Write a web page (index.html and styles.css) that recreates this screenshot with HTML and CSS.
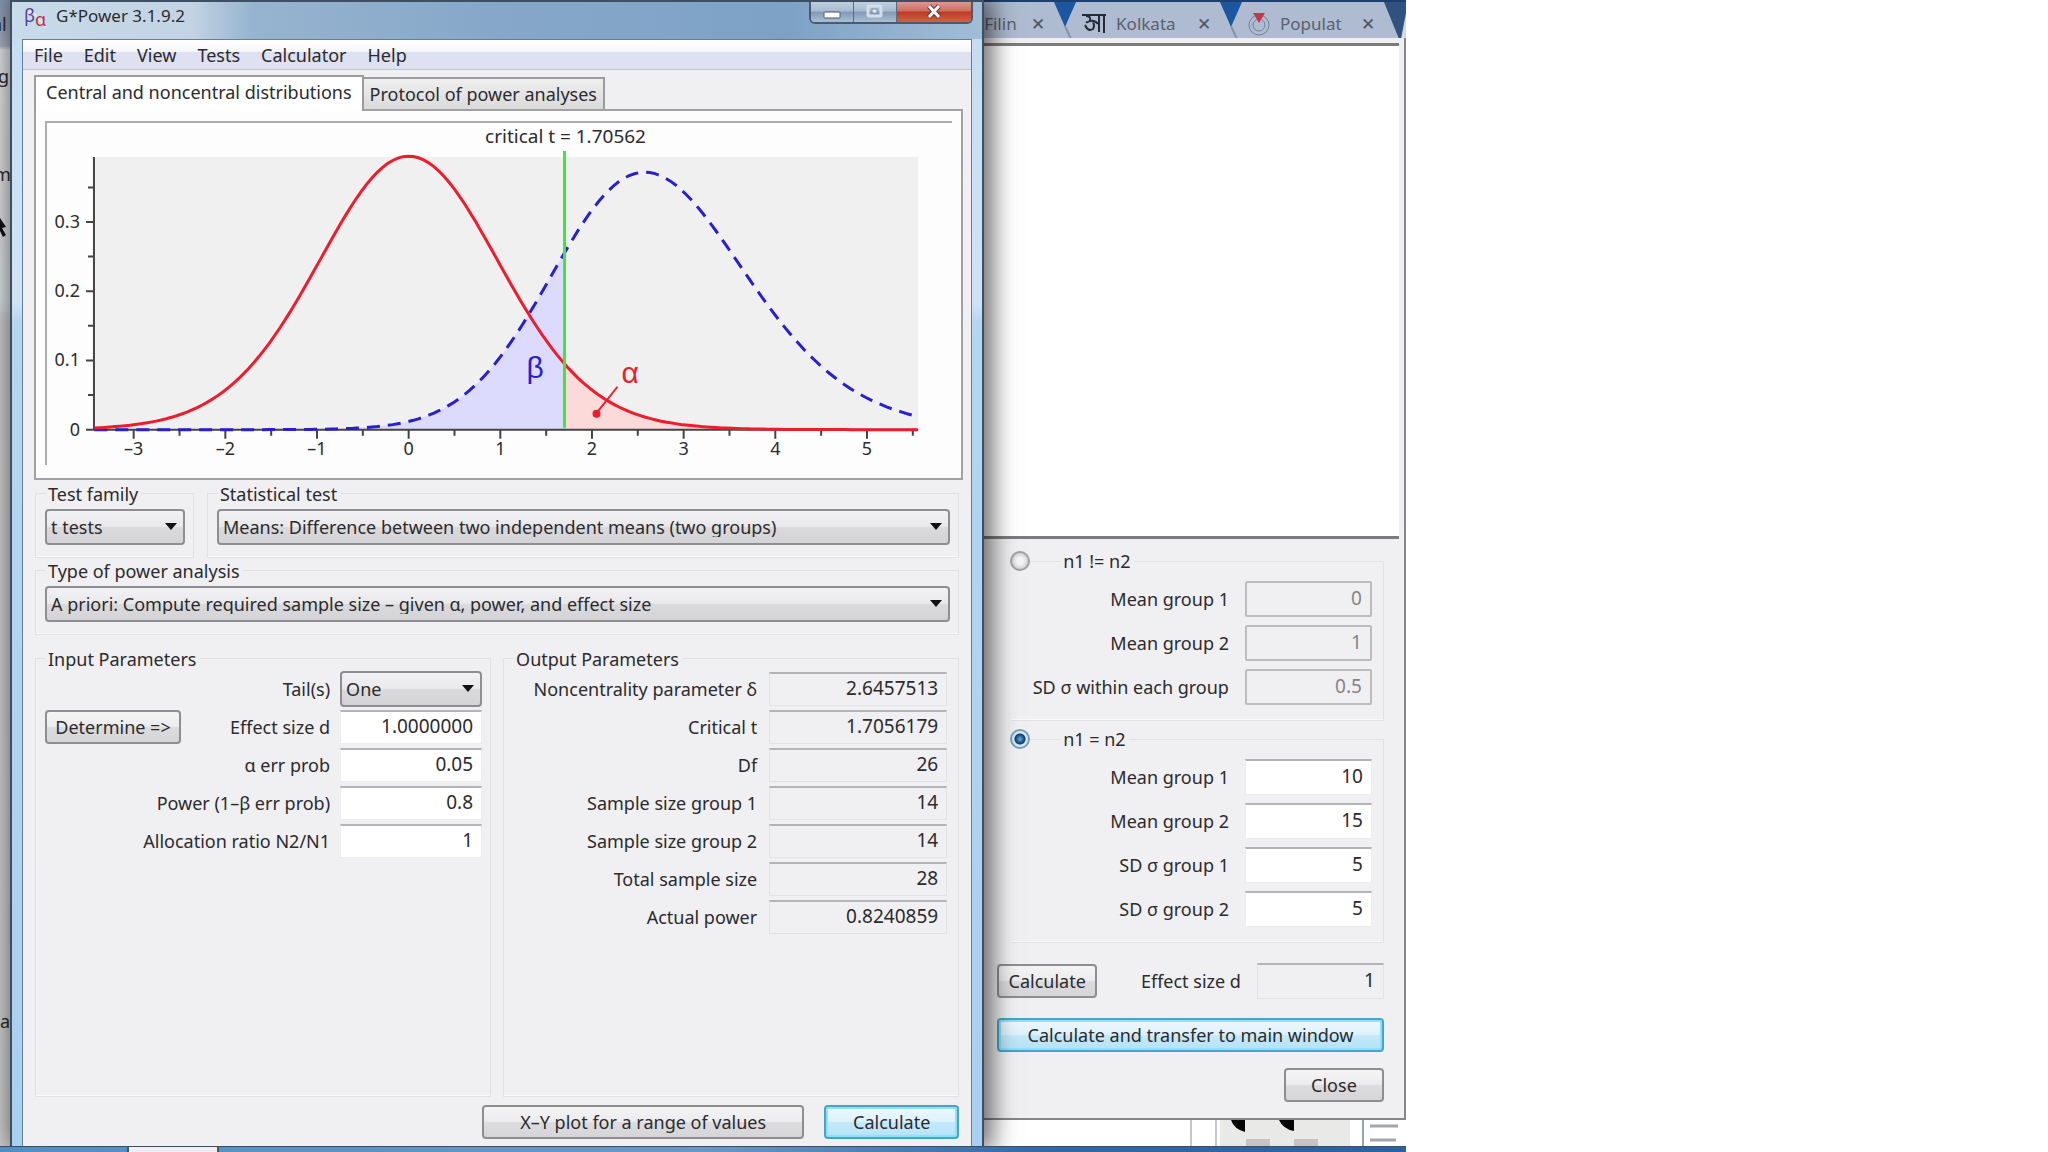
FILE: index.html
```
<!DOCTYPE html>
<html lang="en">
<head>
    <meta charset="UTF-8">
    <meta name="viewport" content="width=device-width, initial-scale=1.0">
    <title>G*Power 3.1.9.2</title>
    <link rel="stylesheet" href="styles.css">
</head>
<body>
<div class="desktop">

    <!-- page behind the windows -->
    <div class="behind-left">
        <span class="bit-al">al</span>
        <span class="bit-g">g</span>
        <span class="bit-m">m</span>
        <svg class="bit-cursor" width="8" height="20" viewBox="0 0 8 20"><path d="M0 0L6 9L2 10L6 17L3 19L0 13Z" fill="#111"/></svg>
        <span class="bit-a">a</span>
    </div>
    <div class="behind-bottom">
        <svg width="216" height="27" viewBox="0 0 216 27">
            <path d="M1 0V27M26 0V27" stroke="#c4c8cc" stroke-width="2"/>
            <rect x="30" y="0" width="130" height="27" fill="#e9eae8"/>
            <path d="M41 0H55V12Q44 9 41 0ZM89 0H104V11Q93 9 89 0Z" fill="#050505"/>
            <rect x="56" y="19" width="24" height="8" fill="#cbc3c3"/>
            <rect x="104" y="19" width="24" height="8" fill="#cbc3c3"/>
            <path d="M173 0V27" stroke="#8aa9bd" stroke-width="2"/>
            <path d="M180 6H208M180 20H206" stroke="#a4a6aa" stroke-width="3"/>
        </svg>
    </div>

    <!-- effect size drawer -->
    <section class="drawer">
        <div class="browser-tabs">
            <span class="tab-name first">Filin</span>
            <span class="tab-x">✕</span>
            <svg class="wedge" width="22" height="37" viewBox="0 0 22 37"><path d="M0 0H22L11 25Z" fill="#1c55a0"/><path d="M11 24L17 37" stroke="#8592a8" stroke-width="2"/></svg>
            <svg class="site" width="26" height="22" viewBox="0 0 26 22" fill="none" stroke="#222b38" stroke-width="2"><path d="M1 2H25M18 2V19M23 2V20M5 3Q10 3 9 7Q8 10 5 9M9 8Q14 7 17 11M4 12Q7 19 12 16Q14 13 12 9"/></svg>
            <span class="tab-name">Kolkata</span>
            <span class="tab-x">✕</span>
            <svg class="wedge" width="22" height="37" viewBox="0 0 22 37"><path d="M0 0H22L11 25Z" fill="#1c55a0"/><path d="M11 24L17 37" stroke="#8592a8" stroke-width="2"/></svg>
            <svg class="site" width="24" height="24" viewBox="0 0 24 24"><g fill="none" stroke="#75809a"><circle cx="12" cy="13" r="10"/><circle cx="12" cy="13" r="6"/></g><path d="M6 1H18L12 11Z" fill="#c93548"/></svg>
            <span class="tab-name">Populat</span>
            <span class="tab-x">✕</span>
            <svg class="wedge last" width="22" height="37" viewBox="0 0 22 37"><path d="M0 0H22V37H15Z" fill="#31527e"/><path d="M22 11L17 37H22Z" fill="#d5dae2"/></svg>
        </div>
        <div class="drawer-blank"></div>
        <form class="drawer-form">
            <div class="choice">
                <input type="radio" name="mode" id="unequal">
                <fieldset class="etched">
                    <legend><label for="unequal">n1 != n2</label></legend>
                    <div class="field"><label for="m1">Mean group 1</label><input type="text" id="m1" value="0" disabled></div>
                    <div class="field"><label for="m2">Mean group 2</label><input type="text" id="m2" value="1" disabled></div>
                    <div class="field"><label for="sd">SD σ within each group</label><input type="text" id="sd" value="0.5" disabled></div>
                </fieldset>
            </div>
            <div class="choice">
                <input type="radio" name="mode" id="equal" checked>
                <fieldset class="etched">
                    <legend><label for="equal">n1 = n2</label></legend>
                    <div class="field"><label for="mg1">Mean group 1</label><input type="text" id="mg1" value="10"></div>
                    <div class="field"><label for="mg2">Mean group 2</label><input type="text" id="mg2" value="15"></div>
                    <div class="field"><label for="sd1">SD σ group 1</label><input type="text" id="sd1" value="5"></div>
                    <div class="field"><label for="sd2">SD σ group 2</label><input type="text" id="sd2" value="5"></div>
                </fieldset>
            </div>
            <div class="drawer-result">
                <button type="button" class="btn">Calculate</button>
                <label for="dres">Effect size d</label>
                <input type="text" id="dres" value="1" readonly>
            </div>
            <button type="button" class="btn primary">Calculate and transfer to main window</button>
            <button type="button" class="btn close-drawer">Close</button>
        </form>
    </section>

    <!-- main window -->
    <main class="window">
        <header class="titlebar">
            <svg class="app-icon" width="24" height="24" viewBox="0 0 24 24">
                <path d="M1 20Q5 1 9 6T22 21" fill="none" stroke="#e9e4f2" stroke-width="2"/>
                <text x="0" y="16" class="icon-b">β</text>
                <text x="11" y="20" class="icon-a">α</text>
            </svg>
            <h1>G*Power 3.1.9.2</h1>
            <div class="win-buttons">
                <button type="button" class="win-min" aria-label="Minimize"><svg width="20" height="16" viewBox="0 0 20 16"><rect x="2" y="8" width="16" height="6" rx="1" fill="#fff" stroke="#515a68"/></svg></button>
                <button type="button" class="win-max" aria-label="Maximize"><svg width="20" height="16" viewBox="0 0 20 16"><rect x="3" y="2" width="13" height="10" rx="1" fill="none" stroke="#d5dde9" stroke-width="3"/><rect x="7" y="5" width="5" height="4" fill="#e3e8f0" stroke="#8190a6"/></svg></button>
                <button type="button" class="win-close" aria-label="Close window"><svg width="20" height="16" viewBox="0 0 20 16"><path d="M5 2L15 13M15 2L5 13" stroke="#6a3430" stroke-width="5"/><path d="M5 2L15 13M15 2L5 13" stroke="#fff" stroke-width="3"/></svg></button>
            </div>
        </header>

        <div class="client">
            <nav class="menubar">
                <button type="button">File</button>
                <button type="button">Edit</button>
                <button type="button">View</button>
                <button type="button">Tests</button>
                <button type="button">Calculator</button>
                <button type="button">Help</button>
            </nav>

            <section class="tabs">
                <div class="tab-row" role="tablist">
                    <button type="button" role="tab" class="tab active" aria-selected="true">Central and noncentral distributions</button>
                    <button type="button" role="tab" class="tab" aria-selected="false">Protocol of power analyses</button>
                </div>
                <div class="tab-panel" role="tabpanel">
                    <div class="plot">
                        <svg id="chart" viewBox="0 0 906 342">
                            <rect x="47" y="34" width="825" height="273" fill="#f0f0f0"/>
                            <path id="beta-area" fill="#dcdafd"/>
                            <path id="alpha-area" fill="#fddada"/>
                            <g id="axes" stroke="#444" stroke-width="2"></g>
                            <path id="h1" fill="none" stroke="#2a1fd0" stroke-width="3" stroke-dasharray="13 8"/>
                            <path id="h0" fill="none" stroke="#ee1c2c" stroke-width="3"/>
                            <path d="M518 28V305" stroke="#3ee63e" stroke-width="3"/>
                            <path d="M571 264L552 288" stroke="#ee1c2c" stroke-width="2"/>
                            <circle cx="550" cy="291" r="4" fill="#ee1c2c"/>
                            <text x="519" y="20" class="middle caption">critical t = 1.70562</text>
                            <text x="480" y="255" class="greek blue">β</text>
                            <text x="575" y="260" class="greek red">α</text>
                        </svg>
                    </div>
                </div>
            </section>

            <form class="settings">
                <div class="test-row">
                    <fieldset class="etched family">
                        <legend><label for="family">Test family</label></legend>
                        <select id="family"><option>t tests</option></select>
                    </fieldset>
                    <fieldset class="etched stat">
                        <legend><label for="stat">Statistical test</label></legend>
                        <select id="stat"><option>Means: Difference between two independent means (two groups)</option></select>
                    </fieldset>
                </div>
                <fieldset class="etched type">
                    <legend><label for="type">Type of power analysis</label></legend>
                    <select id="type"><option>A priori: Compute required sample size – given α, power, and effect size</option></select>
                </fieldset>
                <div class="params">
                    <fieldset class="etched inputs">
                        <legend>Input Parameters</legend>
                        <div class="row"><label for="tails">Tail(s)</label><select id="tails"><option>One</option></select></div>
                        <div class="row"><button type="button" class="btn determine">Determine =&gt;</button><label for="effect">Effect size d</label><input type="text" id="effect" value="1.0000000"></div>
                        <div class="row"><label for="alpha">α err prob</label><input type="text" id="alpha" value="0.05"></div>
                        <div class="row"><label for="power">Power (1–β err prob)</label><input type="text" id="power" value="0.8"></div>
                        <div class="row"><label for="ratio">Allocation ratio N2/N1</label><input type="text" id="ratio" value="1"></div>
                    </fieldset>
                    <fieldset class="etched outputs">
                        <legend>Output Parameters</legend>
                        <div class="row"><label for="ncp">Noncentrality parameter δ</label><input type="text" id="ncp" value="2.6457513" readonly></div>
                        <div class="row"><label for="crit">Critical t</label><input type="text" id="crit" value="1.7056179" readonly></div>
                        <div class="row"><label for="df">Df</label><input type="text" id="df" value="26" readonly></div>
                        <div class="row"><label for="s1">Sample size group 1</label><input type="text" id="s1" value="14" readonly></div>
                        <div class="row"><label for="s2">Sample size group 2</label><input type="text" id="s2" value="14" readonly></div>
                        <div class="row"><label for="total">Total sample size</label><input type="text" id="total" value="28" readonly></div>
                        <div class="row"><label for="actual">Actual power</label><input type="text" id="actual" value="0.8240859" readonly></div>
                    </fieldset>
                </div>
                <div class="actions">
                    <button type="button" class="btn xy">X–Y plot for a range of values</button>
                    <button type="button" class="btn primary calc">Calculate</button>
                </div>
            </form>
        </div>
    </main>

    <footer class="taskbar"><span class="task-item"></span></footer>
</div>
<script src="chart.js"></script>
</body>
</html>
```
FILE: styles.css
```
* {
    box-sizing: border-box;
}

body {
    margin: 0;
    background: #fff;
    color: #2b2b2e;
    font: 18px/20px "Noto Sans", "Open Sans", sans-serif;
}

button, input, select {
    font: inherit;
    color: inherit;
}

h1 {
    margin: 0;
    font-size: 17px;
    font-weight: normal;
}

.desktop {
    position: relative;
    width: 68.65%;
    height: 100vh;
    min-height: 1152px;
    overflow: hidden;
    background: #fff;
}

/* page behind the windows */
.behind-left {
    position: absolute;
    left: 0;
    top: 0;
    bottom: 0;
    width: 12px;
    overflow: hidden;
    background: linear-gradient(#8798b3 0, #a9b4c6 46px, #e4e5e6 50px, #dedede 240px, #d8e4e4 300px, #cfcfcf 320px, #d2d2d2 100%);
}

.behind-left span,
.behind-left svg {
    position: absolute;
    left: 0;
}

.behind-left .bit-al { top: 14px; left: -8px; }
.behind-left .bit-g { top: 66px; left: -2px; }
.behind-left .bit-m { top: 164px; left: -6px; }
.behind-left .bit-cursor { top: 218px; }
.behind-left .bit-a { top: 1011px; }

.behind-bottom {
    position: absolute;
    left: 70%;
    right: 0;
    bottom: 5px;
    display: flex;
    justify-content: flex-end;
    height: 27px;
    background: #fff;
}

.taskbar {
    position: absolute;
    left: 0;
    right: 0;
    bottom: 0;
    z-index: 3;
    height: 6px;
    padding-left: 127px;
    border-top: 1px solid #3c4d60;
    background: linear-gradient(90deg, #4f8fc4, #6a97c4 50%, #2f67a8 75%, #2b62a3);
}

.task-item {
    display: block;
    width: 92px;
    height: 5px;
    border: 1px solid #49545f;
    border-width: 0 2px;
    background: #eeeff5;
}

/* shared controls */
.btn {
    height: 34px;
    padding: 0;
    border: 2px solid #8e8e90;
    border-radius: 4px;
    background: linear-gradient(#f4f4f5 0, #ececee 48%, #dcdcde 52%, #d6d6d8 100%);
}

.btn.primary {
    border-color: #45a5c8;
    background: linear-gradient(#eef8fd 0, #ddf2fc 48%, #c4e9fa 52%, #b5e2f7 100%);
    box-shadow: inset 0 0 0 2px #8fe0f8;
}

select {
    width: 100%;
    height: 36px;
    padding: 0 4px;
    border: 2px solid #8e8e90;
    border-radius: 4px;
    appearance: none;
    background: url("data:image/svg+xml,%3Csvg xmlns='http://www.w3.org/2000/svg' width='12' height='7'%3E%3Cpath d='M0 0H12L6 7Z' fill='%23111'/%3E%3C/svg%3E") no-repeat right 6px center, linear-gradient(#f2f1f3 0, #e9e8ea 48%, #dad9db 52%, #d4d3d6 100%);
}

input[type="text"] {
    height: 34px;
    padding: 0 8px 3px;
    border: 1px solid #ececee;
    border-top: 2px solid #b4b4b6;
    background: #fff;
    font-size: 19px;
    text-align: right;
}

input[type="text"]:read-only {
    border-color: #e3e3e6;
    border-top-color: #b4b4b6;
    background: #f0eff2;
}

input[type="text"]:disabled {
    border: 2px solid #bcbcbf;
    border-radius: 2px;
    color: #858588;
}

.etched {
    min-width: 0;
    margin: 0;
    padding: 5px 8px 12px 9px;
    border: 1px solid #e2e2e5;
    box-shadow: inset 0 -1px 0 #f9f9fa;
}

.etched legend {
    margin-left: 1px;
    padding: 0 3px 0 2px;
    line-height: 20px;
}

/* main window */
.window {
    position: absolute;
    left: 10px;
    right: 30%;
    top: 0;
    bottom: 5px;
    z-index: 2;
    display: flex;
    flex-direction: column;
    border: solid #3e4f63;
    border-width: 2px 2px 0;
    background: linear-gradient(#c5dcf1 0, #cfe3f5 300px, #b5d6f0 320px, #a9cff0 100%);
    box-shadow: 4px 0 24px 4px rgba(0, 0, 0, 0.6);
}

.titlebar {
    display: flex;
    align-items: flex-start;
    height: 37px;
    padding: 0 9px 0 12px;
    background: linear-gradient(90deg, #c7dbe8 0, #c3d3e4 180px, #96b4cf 240px, #86a7c9 50%, #7da2c6 80%, #a2bdd6 100%);
}

.titlebar h1 {
    margin: 4px auto 0 8px;
}

.app-icon {
    margin-top: 4px;
}

.icon-b {
    font-size: 18px;
    fill: #53439c;
}

.icon-a {
    font-size: 18px;
    fill: #b03a46;
}

.win-buttons {
    display: flex;
    border: 2px solid #4d5a6c;
    border-top: 0;
    border-radius: 0 0 6px 6px;
    overflow: hidden;
}

.win-buttons button {
    display: grid;
    place-items: center;
    width: 43px;
    height: 20px;
    padding: 0;
    border: 0;
    border-right: 1px solid #596b82;
    background: linear-gradient(#c0cfdf 0, #a8bbd1 45%, #8199b5 50%, #a9bfd6 100%);
}

.win-buttons .win-close {
    width: 74px;
    border-right: 0;
    background: linear-gradient(#dc9a8e 0, #cc6e5e 45%, #bd3a24 50%, #d2604a 100%);
}

.client {
    display: flex;
    flex: 1;
    flex-direction: column;
    margin: 0 10px;
    border: 1px solid #657e99;
    border-width: 1px 1px 0;
    background: #f0eff1;
}

.menubar {
    display: flex;
    gap: 21px;
    height: 30px;
    padding: 0 11px;
    border-bottom: 1px solid #c2c5cf;
    background: linear-gradient(#fff 0, #f5f6fb 40%, #dde0f0 42%, #dfe2f1 100%);
}

.menubar button {
    padding: 0;
    border: 0;
    background: none;
}

.tabs {
    margin: 5px 8px 0 11px;
}

.tab-row {
    display: flex;
    align-items: flex-end;
}

.tab {
    height: 32px;
    padding: 0 6px;
    border: 2px solid #9c9c9e;
    border-left-width: 0;
    border-bottom: 0;
    background: linear-gradient(#efeff0, #dadadb);
}

.tab.active {
    position: relative;
    z-index: 1;
    height: 36px;
    margin-bottom: -2px;
    padding: 0 10px 4px;
    border-left-width: 2px;
    background: #fff;
}

.tab-panel {
    padding: 10px 9px 13px;
    border: 2px solid #a2a2a4;
    background: #fdfdfd;
}

.plot {
    border: solid #acacae;
    border-width: 2px 0 0 2px;
}

.plot svg {
    display: block;
    width: 100%;
    height: auto;
}

#chart text {
    fill: #2b2b2e;
}

#chart .middle {
    text-anchor: middle;
}

#chart .caption {
    font-size: 19px;
}

#chart .end {
    text-anchor: end;
}

#chart .greek {
    font-family: "Liberation Sans", sans-serif;
    font-size: 30px;
}

#chart .blue { fill: #2a1fd0; }
#chart .red { fill: #ee1c2c; }

.settings {
    display: flex;
    flex: 1;
    flex-direction: column;
    padding: 4px 12px 8px;
}

.test-row {
    display: flex;
    gap: 13px;
    margin-bottom: 3px;
}

.family {
    flex: 0 0 17.2%;
}

.stat {
    flex: 1;
}

.params {
    display: grid;
    flex: 1;
    grid-template-columns: 1fr 1fr;
    gap: 12px;
    margin: 14px 0 8px;
}

.params .etched {
    padding-top: 2px;
}

.params .outputs {
    padding-right: 11px;
}

.row {
    display: flex;
    align-items: center;
    justify-content: flex-end;
    gap: 10px;
    height: 36px;
    margin-bottom: 2px;
}

.row input,
.row select {
    width: 142px;
}

.outputs .row {
    gap: 12px;
}

.outputs .row input {
    width: 178px;
}

.determine {
    width: 136px;
    margin-right: auto;
}

.actions {
    display: flex;
    justify-content: flex-end;
    gap: 20px;
}

.actions .xy {
    width: 322px;
}

.actions .calc {
    width: 135px;
}

/* effect size drawer */
.drawer {
    position: absolute;
    left: 70%;
    right: 0;
    top: 0;
    bottom: 32px;
    display: flex;
    flex-direction: column;
    border: solid #85858a;
    border-width: 0 2px 2px 0;
    background: #f0eff1;
}

.browser-tabs {
    display: flex;
    align-items: center;
    height: 38px;
    margin-right: -2px;
    border-top: 2px solid #1c3f70;
    background: #aebbd0;
    font-size: 17px;
    overflow: hidden;
}

.tab-name {
    width: 64px;
    margin: 8px 12px 0 9px;
    white-space: nowrap;
    color: #59616e;
}

.tab-name.first {
    width: 34px;
    margin: 8px 8px 0 0;
}

.tab-x {
    width: 20px;
    margin: 8px 6px 0 auto;
    text-align: center;
    color: #4c5565;
}

.wedge {
    flex: none;
}

.site {
    flex: none;
    margin: 8px 0 0 5px;
}

.drawer-blank {
    flex: 1;
    margin: 5px 5px 0 0;
    border: solid #7b7b7c;
    border-width: 3px 0;
    background: #fff;
}

.drawer-form {
    display: flex;
    flex-direction: column;
    padding: 12px 20px 16px 13px;
}

.choice {
    display: flex;
    margin-bottom: 8px;
}

.choice + .choice {
    margin-bottom: 20px;
}

.choice .etched {
    flex: 1;
    margin-left: -19px;
    padding: 10px 11px 7px;
    border-left: 0;
}

.choice legend {
    margin-left: 39px;
}

.choice input[type="radio"] {
    position: relative;
    z-index: 1;
    flex: none;
    width: 20px;
    height: 20px;
    margin: 0 0 0 13px;
    border: 2px solid #a2a2a4;
    border-radius: 50%;
    appearance: none;
    background: radial-gradient(#f5f5f6 30%, #cdcdcf 75%);
}

.choice input[type="radio"]:checked {
    border-color: #7b9fb5;
    background: radial-gradient(circle, #6fb3e0 0, #1c4d86 4px, #143a6a 5px, #cfeafa 6px);
}

.field {
    display: flex;
    align-items: center;
    justify-content: flex-end;
    gap: 16px;
    height: 36px;
    margin-bottom: 8px;
}

.field input[type="text"],
.drawer-result input[type="text"] {
    width: 127px;
    height: 36px;
}

.drawer-result {
    display: flex;
    align-items: center;
    gap: 16px;
    margin-bottom: 19px;
}

.drawer-result .btn {
    width: 100px;
    margin-right: auto;
}

.drawer-form > .btn {
    margin-bottom: 16px;
}

.drawer-form > .close-drawer {
    align-self: flex-end;
    width: 100px;
    margin-bottom: 0;
}
```
FILE: chart.js
```
const DF = 26;
const DELTA = 2.6457513;
const CRIT = 1.70562;
const X0 = 362, UNIT = 91.75, Y0 = 307, YSCALE = 693;

// unnormalised noncentral t density
function raw(t, mu) {
    let s = t * t + DF;
    let m = mu * t / Math.sqrt(s);
    let sum = 0;
    for (let y = 0.05; y < 18; y += 0.05) {
        sum += Math.pow(y, DF) * Math.exp(-0.5 * (y - m) * (y - m));
    }
    return Math.pow(s, -(DF + 1) / 2) * Math.exp(-DF * mu * mu / (2 * s)) * sum;
}

const NORM = 0.39512 / raw(0, 0);

function points(mu, from, to) {
    let list = [];
    for (let i = 0; i <= 160; i++) {
        let t = from + (to - from) * i / 160;
        list.push((X0 + t * UNIT).toFixed(1) + "," + (Y0 - raw(t, mu) * NORM * YSCALE).toFixed(1));
    }
    return list.join("L");
}

function area(mu, from, to) {
    return "M" + (X0 + from * UNIT) + "," + Y0 + "L" + points(mu, from, to) + "V" + Y0 + "Z";
}

document.getElementById("h0").setAttribute("d", "M" + points(0, -3.43, 5.55));
document.getElementById("h1").setAttribute("d", "M" + points(DELTA, -3.43, 5.55));
document.getElementById("beta-area").setAttribute("d", area(DELTA, -3.43, CRIT));
document.getElementById("alpha-area").setAttribute("d", area(0, CRIT, 5.55));

let chart = document.getElementById("chart");
let d = "M47 34V307M41 307H872";

function label(x, y, text, cls) {
    let el = document.createElementNS("http://www.w3.org/2000/svg", "text");
    el.setAttribute("x", x);
    el.setAttribute("y", y);
    el.setAttribute("class", cls);
    el.textContent = text;
    chart.appendChild(el);
}

for (let t = -3; t <= 5.5; t += 0.5) {
    let major = t % 1 === 0;
    d += "M" + (X0 + t * UNIT) + " 307v" + (major ? 9 : 6);
    if (major) label(X0 + t * UNIT, 332, String(t).replace("-", "–"), "middle");
}
for (let i = 0; i < 8; i++) {
    let y = Y0 - i * 0.05 * YSCALE;
    d += "M47 " + y + "h" + (i % 2 ? -6 : -8);
    if (i % 2 === 0) label(33, y + 6, i ? "0." + i / 2 : "0", "end");
}

let axis = document.createElementNS("http://www.w3.org/2000/svg", "path");
axis.setAttribute("d", d);
document.getElementById("axes").appendChild(axis);
```
